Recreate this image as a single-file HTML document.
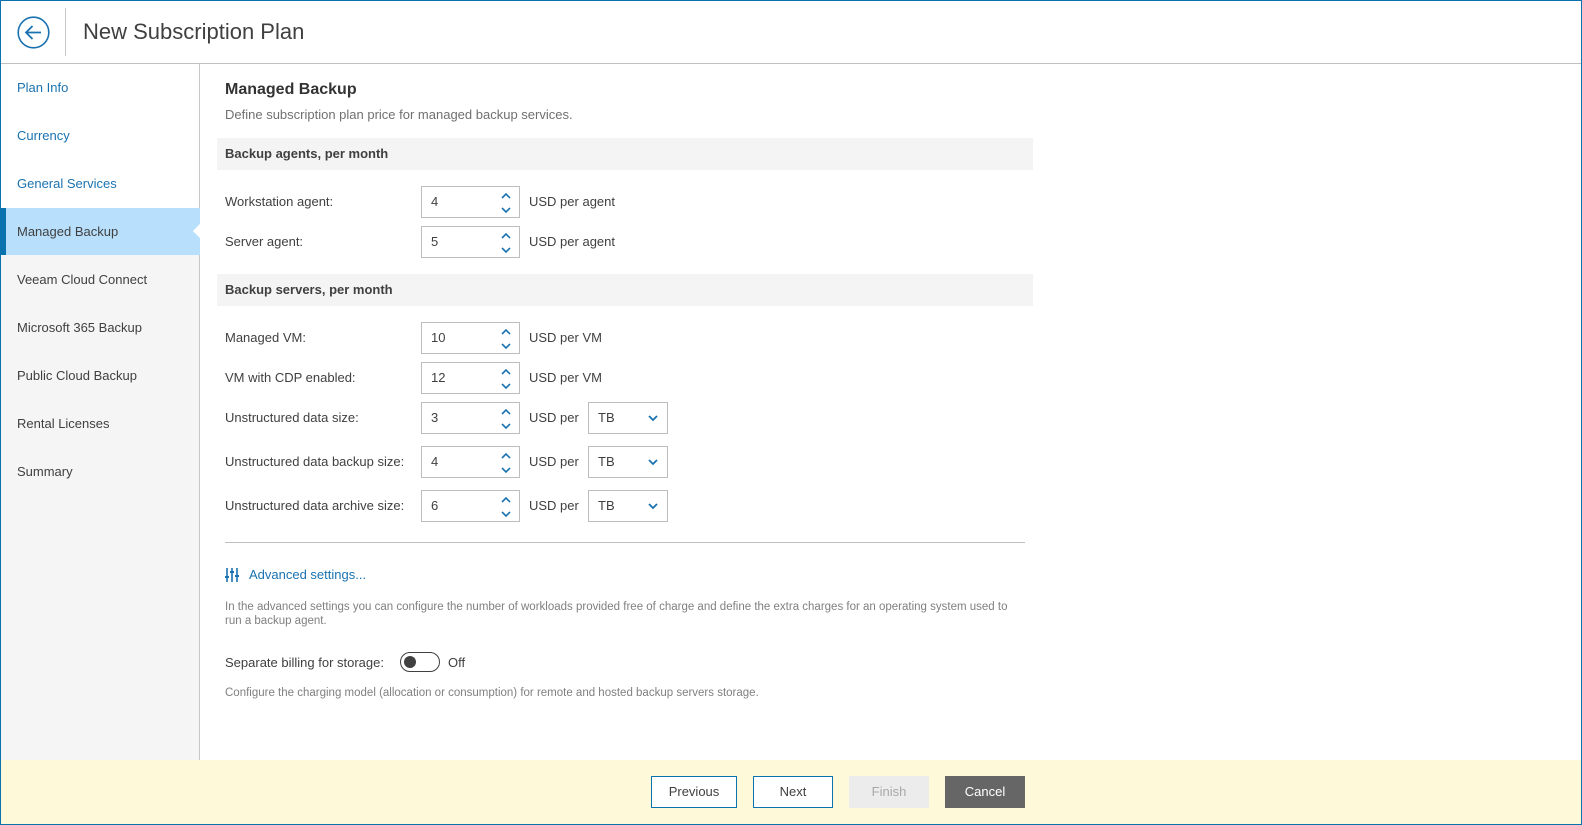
<!DOCTYPE html>
<html><head><meta charset="utf-8"><style>
*{margin:0;padding:0;box-sizing:border-box}
body{width:1582px;height:825px;position:relative;overflow:hidden;background:#fff;font-family:"Liberation Sans",sans-serif;font-size:13px;color:#404040}
.a{position:absolute;white-space:nowrap}
.frame{position:absolute;left:0;top:0;width:1582px;height:825px;border:1px solid #0a72ad;z-index:10;pointer-events:none}
.side{position:absolute;left:1px;top:64px;width:199px;height:696px;background:#f5f5f5;border-right:1px solid #c8c8c8}
.nav{position:absolute;left:17px;font-size:13px;line-height:16px}
.blue{color:#1a73b0}
.lbl{position:absolute;left:225px;line-height:16px}
.inp{position:absolute;left:421px;width:99px;height:32px;border:1px solid #bdbdbd;background:#fff}
.inp span{position:absolute;left:9px;top:7px}
.inp svg{position:absolute;right:8px;top:5px}
.unit{position:absolute;left:529px;line-height:16px}
.sel{position:absolute;left:588px;width:80px;height:32px;border:1px solid #bdbdbd;background:#fff}
.sel span{position:absolute;left:9px;top:7px}
.sel svg{position:absolute;right:9px;top:12px}
.band{position:absolute;left:217px;width:816px;height:32px;background:#f4f4f4;font-weight:bold;padding:8px 0 0 8px}
.btn{position:absolute;top:776px;height:32px;text-align:center;line-height:30px;font-size:13px}
</style></head><body>
<div class="frame"></div>
<svg class="a" style="left:17px;top:16px" width="33" height="33" viewBox="0 0 33 33"><circle cx="16.5" cy="16.5" r="15.3" fill="none" stroke="#1a73b0" stroke-width="1.6"/><path d="M9 16.5H24M15.5 10L9 16.5L15.5 23" fill="none" stroke="#1a73b0" stroke-width="1.8"/></svg>
<div class="a" style="left:65px;top:8px;width:1px;height:48px;background:#c8c8c8"></div>
<div class="a" style="left:83px;top:19px;font-size:22px;color:#404040">New Subscription Plan</div>
<div class="a" style="left:1px;top:63px;width:1580px;height:1px;background:#c0c0c0"></div>
<div class="side"></div>
<div class="a" style="left:1px;top:64px;width:198px;height:144px;background:#fff"></div>
<div class="a" style="left:1px;top:208px;width:199px;height:47px;background:#b8e0fc"></div>
<div class="a" style="left:1px;top:208px;width:5px;height:47px;background:#0a72ad"></div>
<div class="a" style="left:195px;top:226px;width:10px;height:10px;background:#fff;transform:rotate(45deg)"></div>
<div class="nav a blue" style="top:80px">Plan Info</div>
<div class="nav a blue" style="top:128px">Currency</div>
<div class="nav a blue" style="top:176px">General Services</div>
<div class="nav a" style="top:224px">Managed Backup</div>
<div class="nav a" style="top:272px">Veeam Cloud Connect</div>
<div class="nav a" style="top:320px">Microsoft 365 Backup</div>
<div class="nav a" style="top:368px">Public Cloud Backup</div>
<div class="nav a" style="top:416px">Rental Licenses</div>
<div class="nav a" style="top:464px">Summary</div>
<div class="a" style="left:225px;top:81px;font-size:16px;font-weight:bold;color:#333">Managed Backup</div>
<div class="a" style="left:225px;top:107px;color:#707070">Define subscription plan price for managed backup services.</div>
<div class="band" style="top:138px">Backup agents, per month</div>
<div class="band" style="top:274px">Backup servers, per month</div>
<div class="lbl" style="top:194px">Workstation agent:</div>
<div class="lbl" style="top:234px">Server agent:</div>
<div class="lbl" style="top:330px">Managed VM:</div>
<div class="lbl" style="top:370px">VM with CDP enabled:</div>
<div class="lbl" style="top:410px">Unstructured data size:</div>
<div class="lbl" style="top:454px">Unstructured data backup size:</div>
<div class="lbl" style="top:498px">Unstructured data archive size:</div>
<div class="inp" style="top:186px"><span>4</span><svg width="10" height="22"><path d="M1 6L5 2L9 6M1 16L5 20L9 16" fill="none" stroke="#1a73b0" stroke-width="1.6"/></svg></div>
<div class="inp" style="top:226px"><span>5</span><svg width="10" height="22"><path d="M1 6L5 2L9 6M1 16L5 20L9 16" fill="none" stroke="#1a73b0" stroke-width="1.6"/></svg></div>
<div class="inp" style="top:322px"><span>10</span><svg width="10" height="22"><path d="M1 6L5 2L9 6M1 16L5 20L9 16" fill="none" stroke="#1a73b0" stroke-width="1.6"/></svg></div>
<div class="inp" style="top:362px"><span>12</span><svg width="10" height="22"><path d="M1 6L5 2L9 6M1 16L5 20L9 16" fill="none" stroke="#1a73b0" stroke-width="1.6"/></svg></div>
<div class="inp" style="top:402px"><span>3</span><svg width="10" height="22"><path d="M1 6L5 2L9 6M1 16L5 20L9 16" fill="none" stroke="#1a73b0" stroke-width="1.6"/></svg></div>
<div class="inp" style="top:446px"><span>4</span><svg width="10" height="22"><path d="M1 6L5 2L9 6M1 16L5 20L9 16" fill="none" stroke="#1a73b0" stroke-width="1.6"/></svg></div>
<div class="inp" style="top:490px"><span>6</span><svg width="10" height="22"><path d="M1 6L5 2L9 6M1 16L5 20L9 16" fill="none" stroke="#1a73b0" stroke-width="1.6"/></svg></div>
<div class="unit" style="top:194px">USD per agent</div>
<div class="unit" style="top:234px">USD per agent</div>
<div class="unit" style="top:330px">USD per VM</div>
<div class="unit" style="top:370px">USD per VM</div>
<div class="unit" style="top:410px">USD per</div>
<div class="unit" style="top:454px">USD per</div>
<div class="unit" style="top:498px">USD per</div>
<div class="sel" style="top:402px"><span>TB</span><svg width="10" height="7"><path d="M1 1L5 5L9 1" fill="none" stroke="#1a73b0" stroke-width="1.8"/></svg></div>
<div class="sel" style="top:446px"><span>TB</span><svg width="10" height="7"><path d="M1 1L5 5L9 1" fill="none" stroke="#1a73b0" stroke-width="1.8"/></svg></div>
<div class="sel" style="top:490px"><span>TB</span><svg width="10" height="7"><path d="M1 1L5 5L9 1" fill="none" stroke="#1a73b0" stroke-width="1.8"/></svg></div>
<div class="a" style="left:225px;top:542px;width:800px;height:1px;background:#c0c0c0"></div>
<svg class="a" style="left:225px;top:568px" width="14" height="14"><g stroke="#1a73b0" stroke-width="1.6"><path d="M2 0V14M7 0V14M12 0V14"/></g><g fill="#1a73b0"><rect x="0" y="8" width="4" height="2"/><rect x="5" y="3" width="4" height="2"/><rect x="10" y="7" width="4" height="2"/></g></svg>
<div class="a blue" style="left:249px;top:567px">Advanced settings...</div>
<div class="a" style="left:225px;top:600px;font-size:11.5px;color:#808080;line-height:14px;white-space:normal;width:790px">In the advanced settings you can configure the number of workloads provided free of charge and define the extra charges for an operating system used to run a backup agent.</div>
<div class="a" style="left:225px;top:655px">Separate billing for storage:</div>
<div class="a" style="left:400px;top:652px;width:40px;height:20px;border:1px solid #404040;border-radius:10px"><div style="position:absolute;left:3px;top:3px;width:12px;height:12px;border-radius:50%;background:#404040"></div></div>
<div class="a" style="left:448px;top:655px">Off</div>
<div class="a" style="left:225px;top:687px;font-size:11.5px;color:#808080">Configure the charging model (allocation or consumption) for remote and hosted backup servers storage.</div>
<div class="a" style="left:1px;top:760px;width:1580px;height:64px;background:#fef9d9"></div>
<div class="btn" style="left:651px;width:86px;border:1px solid #0a72ad;background:#fff">Previous</div>
<div class="btn" style="left:753px;width:80px;border:1px solid #0a72ad;background:#fff">Next</div>
<div class="btn" style="left:849px;width:80px;background:#ececec;color:#a8a8a8;line-height:32px">Finish</div>
<div class="btn" style="left:945px;width:80px;background:#666;color:#fff;line-height:32px">Cancel</div>
</body></html>
